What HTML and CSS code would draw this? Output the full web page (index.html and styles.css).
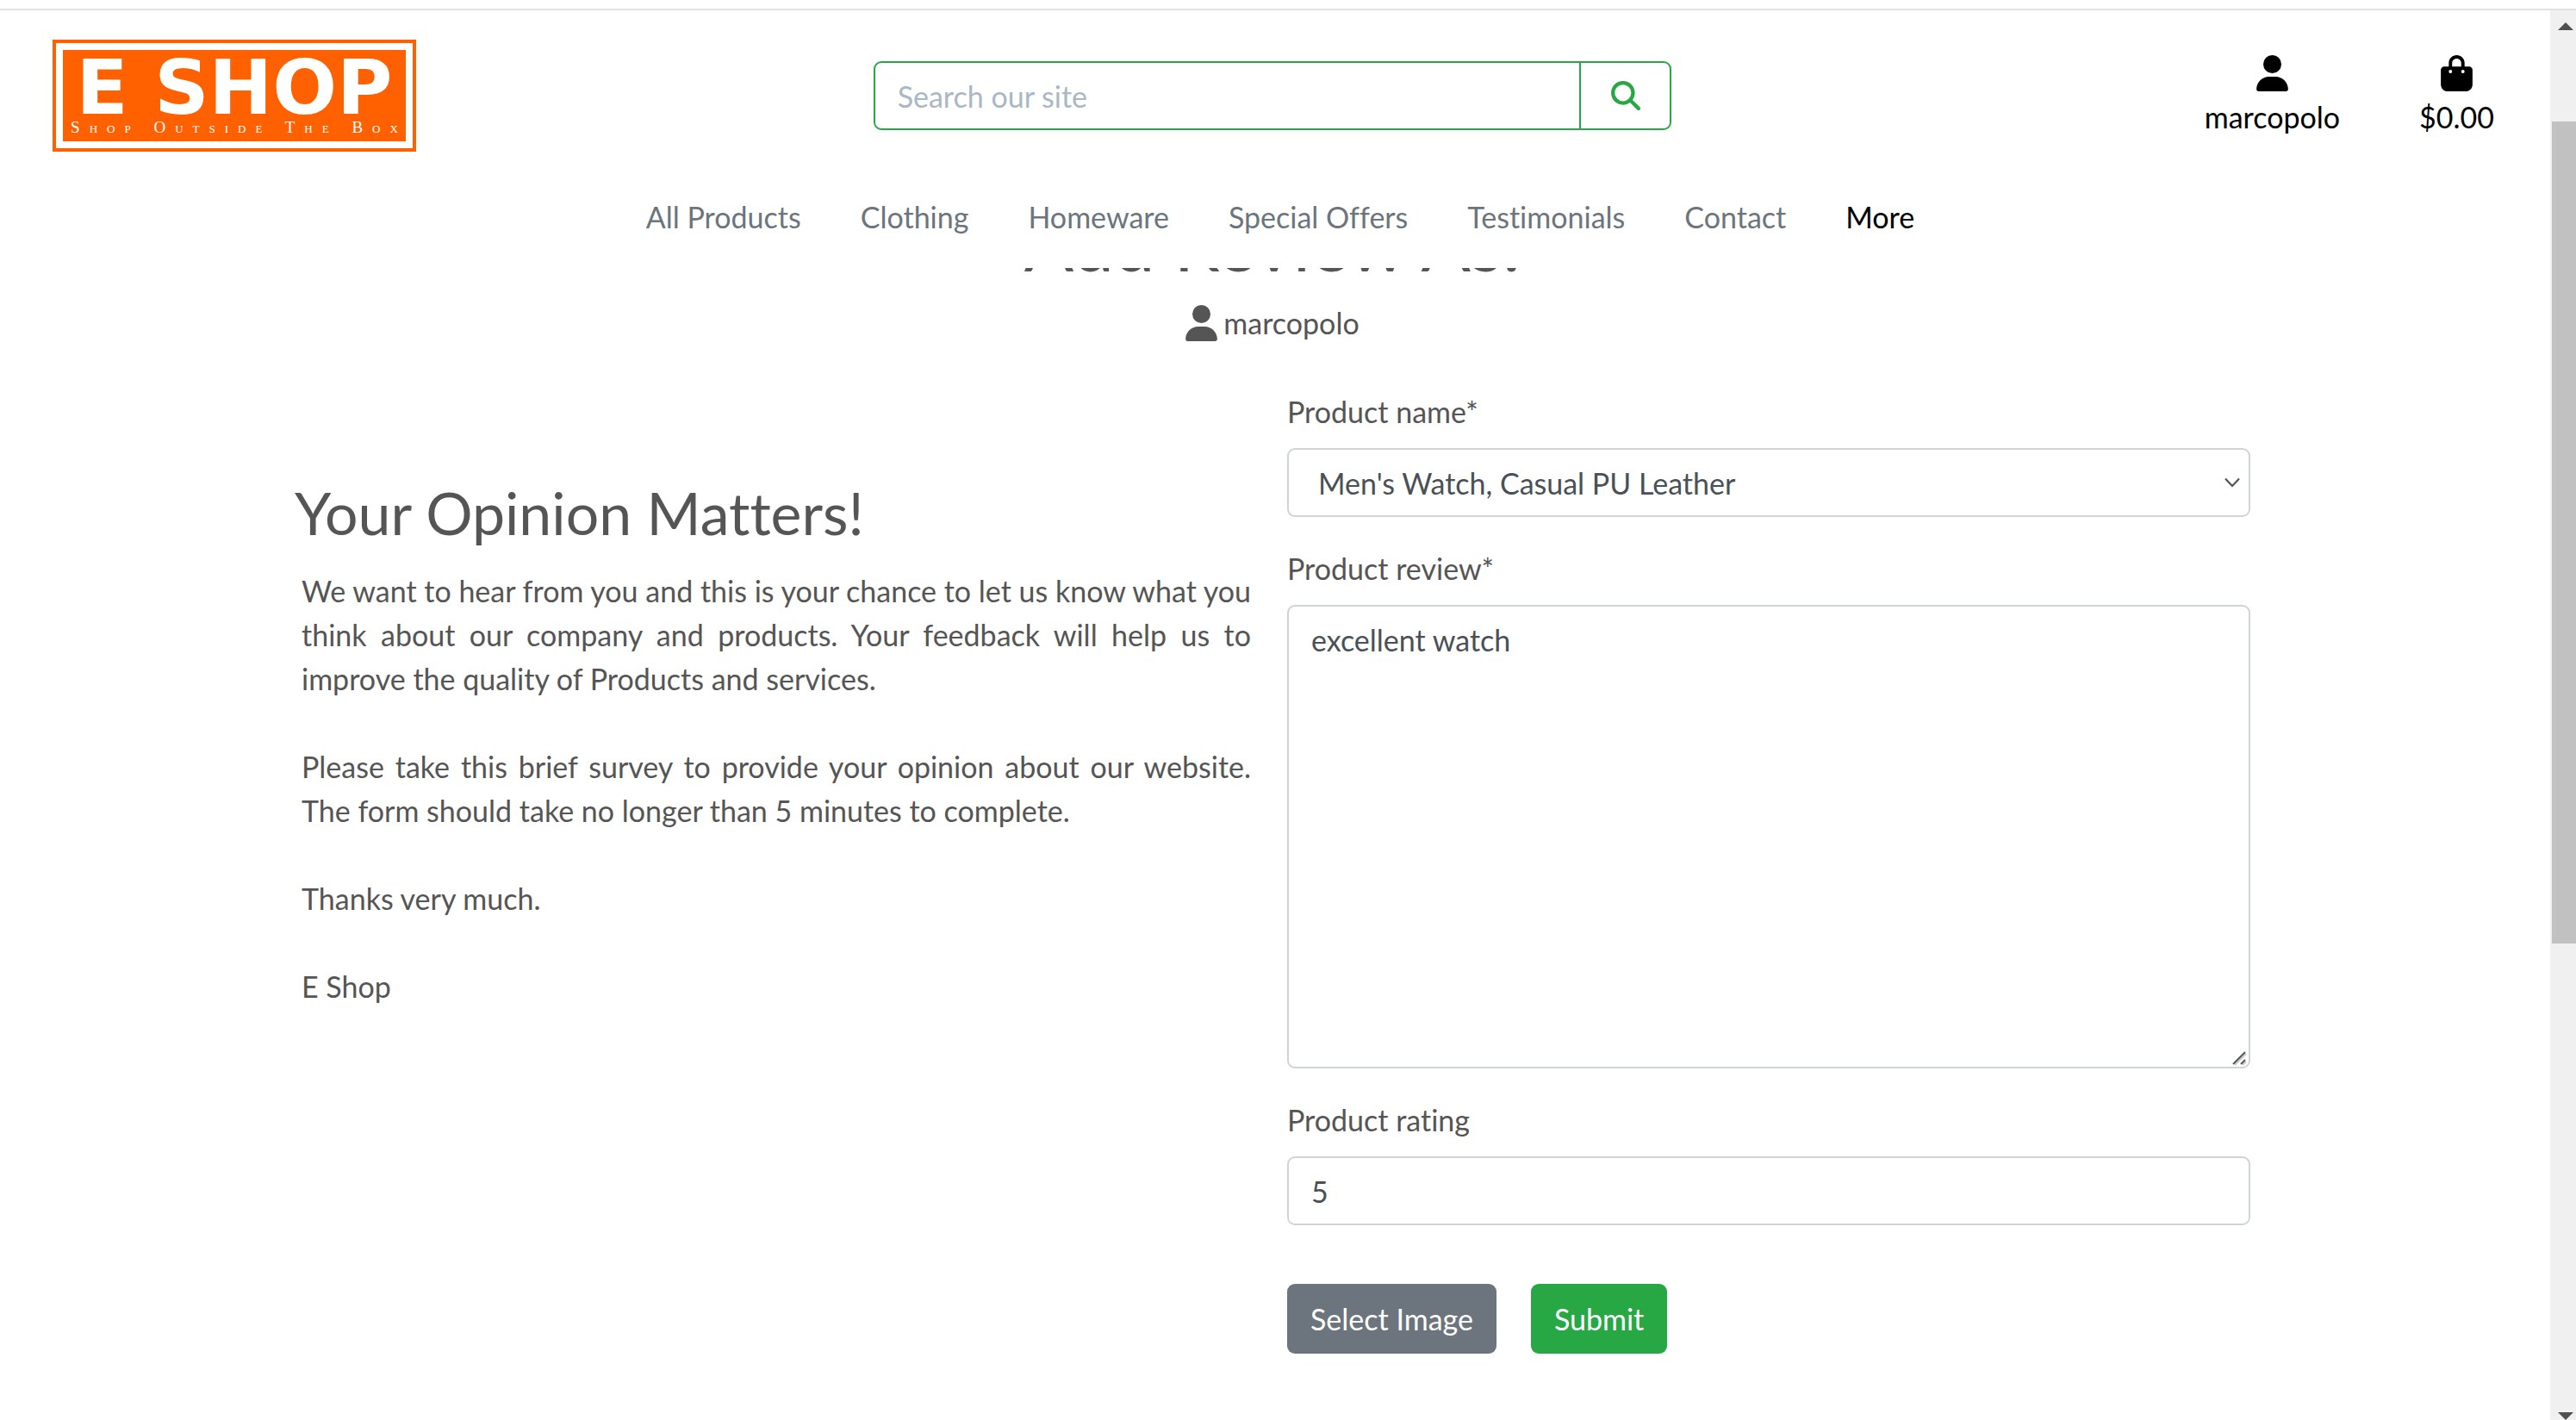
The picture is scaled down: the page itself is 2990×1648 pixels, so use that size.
FILE: index.html
```html
<!DOCTYPE html>
<html lang="en">
<head>
<meta charset="utf-8">
<title>E Shop</title>
<link rel="stylesheet" href="styles.css">
</head>
<body>
<svg class="sprite" aria-hidden="true">
  <symbol id="icon-user" viewBox="0 0 448 512"><path d="M224 256A128 128 0 1 0 224 0a128 128 0 1 0 0 256zm-45.700 48C79.800 304 0 383.800 0 482.300 0 498.700 13.300 512 29.700 512h388.600c16.400 0 29.700-13.300 29.700-29.700 0-98.500-79.800-178.300-178.300-178.300z"/></symbol>
  <symbol id="icon-bag" viewBox="0 0 448 512"><path d="M160 112c0-35.300 28.700-64 64-64s64 28.700 64 64v48H160v-48zm-48 48H48c-26.500 0-48 21.500-48 48v208c0 53 43 96 96 96h256c53 0 96-43 96-96V208c0-26.500-21.500-48-48-48h-64v-48C336 50.100 285.900 0 224 0S112 50.100 112 112v48zm24 48a24 24 0 1 1 0 48 24 24 0 1 1 0-48zm152 24a24 24 0 1 1 48 0 24 24 0 1 1-48 0z"/></symbol>
  <symbol id="icon-search" viewBox="0 0 512 512"><path d="M416 208c0 45.900-14.900 88.300-40 122.700l126.600 126.700c12.500 12.500 12.500 32.800 0 45.300s-32.800 12.500-45.300 0L330.700 376c-34.400 25.200-76.800 40-122.700 40C93.100 416 0 322.900 0 208S93.100 0 208 0s208 93.100 208 208zM208 352a144 144 0 1 0 0-288 144 144 0 1 0 0 288z"/></symbol>
</svg>

<div class="page">
  <header class="site-header">
    <div class="top-row">
      <a class="logo" href="#">
        <span class="logo-panel">
          <span class="logo-name">E SHOP</span>
          <span class="logo-tagline">Shop Outside The Box</span>
        </span>
      </a>
      <form class="search">
        <input class="search-input" type="text" placeholder="Search our site" aria-label="Search our site">
        <button class="search-button" type="button" aria-label="Search"><svg class="search-icon"><use href="#icon-search"/></svg></button>
      </form>
      <div class="account">
        <a class="account-link" href="#"><svg class="user-icon"><use href="#icon-user"/></svg><span>marcopolo</span></a>
        <a class="account-link" href="#"><svg class="user-icon"><use href="#icon-bag"/></svg><span>$0.00</span></a>
      </div>
    </div>
    <nav class="main-nav">
      <a href="#">All Products</a>
      <a href="#">Clothing</a>
      <a href="#">Homeware</a>
      <a href="#">Special Offers</a>
      <a href="#">Testimonials</a>
      <a href="#">Contact</a>
      <a class="active" href="#">More</a>
    </nav>
  </header>

  <main class="content">
    <h1 class="title">Add Review As:</h1>
    <p class="reviewer"><svg class="user-icon"><use href="#icon-user"/></svg><span>marcopolo</span></p>
    <div class="columns">
      <section class="intro">
        <h2>Your Opinion Matters!</h2>
        <div class="intro-text">
          <p>We want to hear from you and this is your chance to let us know what you think about our company and products. Your feedback will help us to improve the quality of Products and services.</p>
          <p>Please take this brief survey to provide your opinion about our website. The form should take no longer than 5 minutes to complete.</p>
          <p>Thanks very much.</p>
          <p>E Shop</p>
        </div>
      </section>
      <form class="review-form">
        <div class="field">
          <label for="product">Product name*</label>
          <div class="control-wrap">
            <select class="control select" id="product"><option>Men's Watch, Casual PU Leather</option></select>
            <svg class="chevron" viewBox="0 0 18 12"><path d="M1 1.500l8 8.500 8-8.500"/></svg>
          </div>
        </div>
        <div class="field">
          <label for="review">Product review*</label>
          <div class="control-wrap">
            <textarea class="control textarea" id="review">excellent watch</textarea>
            <svg class="grip" viewBox="0 0 18 18"><path class="grip-shade" d="M4 17L17 4M13 17l4-4"/><path d="M2 16L16 2M11 16l5-5"/></svg>
          </div>
        </div>
        <div class="field">
          <label for="rating">Product rating</label>
          <input class="control" id="rating" type="text" value="5">
        </div>
        <div class="actions">
          <button class="button" type="button">Select Image</button>
          <button class="button submit" type="button">Submit</button>
        </div>
      </form>
    </div>
  </main>
</div>

<div class="scrollbar" aria-hidden="true">
  <svg class="arrow" viewBox="0 0 18 9"><path d="M9 0l9 9H0z"/></svg>
  <div class="track"><div class="thumb"></div></div>
  <svg class="arrow" viewBox="0 0 18 9"><path d="M0 0h18L9 9z"/></svg>
</div>
</body>
</html>
```
FILE: styles.css
```css
* {
  box-sizing: border-box;
}

html {
  padding-top: 10px;
  height: 100%;
  overflow: hidden;
  background: #fff;
}

body {
  margin: 0;
  display: grid;
  grid-template-columns: minmax(0, 1fr) 30px;
  min-height: 100vh;
  border-top: 2px solid #e2e2e2;
  color: #555;
  font-family: Lato, sans-serif;
  font-size: 34px;
  line-height: 51px;
  font-variant-ligatures: none;
}

h1, h2, p {
  margin: 0;
  font-weight: 400;
}

a {
  color: inherit;
  text-decoration: none;
}

input, select, textarea, button {
  margin: 0;
  font: inherit;
  font-variant-ligatures: none;
  color: inherit;
}

svg {
  display: block;
  fill: currentColor;
}

.sprite {
  position: absolute;
  width: 0;
  height: 0;
}

/* Header */
.site-header {
  position: sticky;
  top: 0;
  z-index: 2;
  padding: 34px 0;
  background: #fff;
}

.top-row {
  display: grid;
  grid-template-columns: repeat(3, minmax(0, 1fr));
  height: 180px;
}

.logo {
  justify-self: start;
  align-self: start;
  margin-left: 61px;
  width: 422px;
  height: 130px;
  padding: 8px;
  border: 4px solid #ff6000;
}

.logo-panel {
  display: flex;
  flex-direction: column;
  align-items: center;
  height: 106px;
  padding-top: 8px;
  background: #ff6000;
  color: #fff;
}

.logo-name {
  font: 700 88px/72px "DejaVu Sans", sans-serif;
  white-space: nowrap;
}

.logo-tagline {
  font: 19px/20px "Liberation Serif", serif;
  font-variant: small-caps;
  letter-spacing: 11px;
  margin-right: -11px;
  white-space: nowrap;
}

.search {
  display: flex;
  align-self: start;
  margin: 25px 33px 0 27px;
  height: 80px;
  border: 2px solid #28a745;
  border-radius: 9px;
}

.search-input {
  flex: 1;
  min-width: 0;
  padding: 0 26px;
  border: 0;
  background: none;
}

.search-input::placeholder {
  color: #aab7c4;
  opacity: 1;
}

.search-button {
  display: grid;
  place-items: center;
  width: 105px;
  padding: 0;
  border: 0;
  border-left: 2px solid #28a745;
  background: none;
  color: #28a745;
}

.search-icon {
  width: 34px;
  height: 34px;
}

.account {
  display: flex;
  justify-content: flex-end;
  align-items: flex-start;
  gap: 92px;
  padding: 18px 65px 0 0;
  color: #000;
}

.account-link {
  display: flex;
  flex-direction: column;
  align-items: center;
  gap: 4px;
}

.user-icon {
  width: 37px;
  height: 42px;
}

.main-nav {
  display: flex;
  justify-content: center;
  gap: 69px;
  padding-left: 12px;
  color: #6c757d;
}

.main-nav .active {
  color: #000;
}

.content {
  margin-top: -80px;
}

.title {
  padding-right: 6px;
  font-size: 85px;
  line-height: 102px;
  text-align: center;
}

.reviewer {
  display: flex;
  align-items: center;
  justify-content: center;
  gap: 7px;
  margin-top: 16px;
  padding-right: 6px;
}

.columns {
  display: grid;
  grid-template-columns: minmax(0, 1fr) minmax(0, 1fr);
  gap: 34px;
  padding: 52px 348px 0 342px;
}

.intro {
  padding-top: 102px;
}

.intro h2 {
  font-size: 68px;
  line-height: 82px;
}

.intro-text {
  display: grid;
  gap: 51px;
  padding: 24px 8px 0;
  text-align: justify;
}

.field {
  display: grid;
  gap: 17px;
  margin-bottom: 34px;
}

.control-wrap {
  position: relative;
  display: grid;
}

.control {
  width: 100%;
  height: 80px;
  padding: 0 26px;
  border: 2px solid #ced4da;
  border-radius: 9px;
  background: #fff;
  color: #495057;
}

.select {
  appearance: none;
  padding-left: 34px;
}

.textarea {
  height: 538px;
  padding: 13px 26px;
  resize: none;
}

.chevron {
  position: absolute;
  top: 34px;
  right: 12px;
  width: 18px;
  height: 12px;
  fill: none;
  stroke: #495057;
  stroke-width: 2;
}

.grip {
  position: absolute;
  right: 4px;
  bottom: 3px;
  width: 18px;
  height: 18px;
  fill: none;
  stroke: #555;
  stroke-width: 2;
}

.grip-shade {
  stroke: #ccc;
}

.actions {
  display: flex;
  gap: 40px;
  padding-top: 34px;
}

.button {
  height: 81px;
  padding: 0 27px;
  border: 0;
  border-radius: 9px;
  background: #6c757d;
  color: #fff;
}

.submit {
  background: #28a745;
}

/* Scroll bar */
.scrollbar {
  display: flex;
  flex-direction: column;
  align-items: flex-end;
  height: calc(100vh - 12px);
  padding-top: 14px;
  background: #f0f0f0;
  color: #505050;
}

.arrow {
  width: 18px;
  height: 9px;
  margin-right: 3px;
}

.track {
  flex: 1;
  width: 28px;
  padding-top: 106px;
}

.thumb {
  height: 59%;
  min-height: 954px;
  background: #c1c1c1;
}
```
